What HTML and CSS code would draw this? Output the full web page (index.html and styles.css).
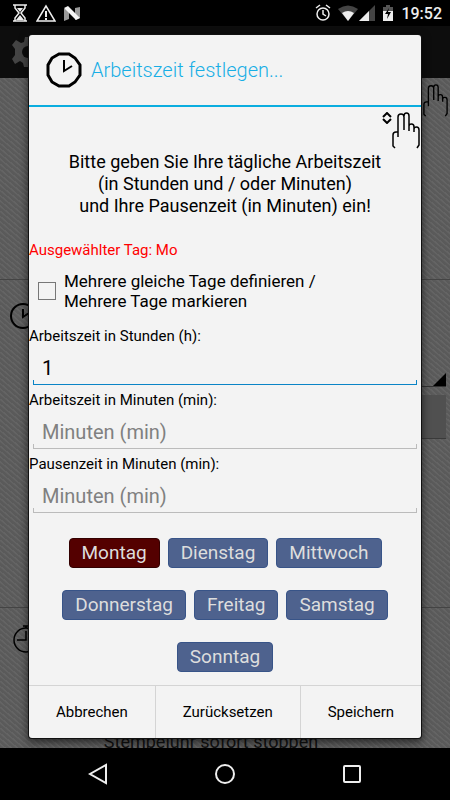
FILE: index.html
```html
<!DOCTYPE html>
<html lang="de">
<head>
<meta charset="utf-8">
<meta name="viewport" content="width=device-width, initial-scale=1">
<title>Arbeitszeit festlegen</title>
<link rel="stylesheet" href="styles.css">
</head>
<body>
<svg class="defs" aria-hidden="true">
  <symbol id="hand" viewBox="0 0 28 37">
    <path d="M3 36L1 34V23Q1 20 4 20H6M6 25V5Q6 2 9 2Q12 2 12 5V18M12 4Q12 1 14.500 1Q17 1 17 4V19M17 14Q17 12 19.500 12Q22 12 22 15V20M22 17Q22 15 24.500 15Q27 15 27 18V33L25 36" fill="none" stroke="currentColor" stroke-width="1.5"/>
  </symbol>
</svg>
<header class="status">
  <div class="status-group">
    <svg width="16" height="20" viewBox="0 0 16 20" fill="none" stroke="#eee" stroke-width="1.5"><path d="M1 2h14M1 18h14M3 2v3l4 5-4 5v3M13 2v3l-4 5 4 5v3"/><path d="M5 5h6l-3 4zM4 17l4-5 4 5z" fill="#eee" stroke="none"/></svg>
    <svg width="20" height="20" viewBox="0 0 20 20" fill="none" stroke="#eee" stroke-width="1.5"><path d="M10 3L1 18h18z"/><path d="M10 8v6M10 15v2" stroke-width="2"/></svg>
    <svg width="16" height="20" viewBox="0 0 16 20"><path d="M0 6l5-2v12l-5 2zM11 5l5-1v11l-5 2z" fill="#999"/><path d="M0 5l4-2 12 12-4 2z" fill="#f4f4f4"/></svg>
  </div>
  <div class="status-group status-right">
    <svg width="16" height="18" viewBox="0 0 16 18" fill="none" stroke="#eee" stroke-width="1.5"><circle cx="8" cy="10" r="6"/><path d="M8 6v4l3 2M1 4l4-3M15 4l-4-3"/></svg>
    <svg class="wifi" width="20" height="18" viewBox="0 0 20 18"><path d="M0 5Q10-2 20 5L10 17z" fill="#444"/><path d="M4 9q6-4 12 0l-6 8z" fill="#eee"/></svg>
    <svg class="signal" width="16" height="18" viewBox="0 0 16 18"><path d="M0 17L16 1v16z" fill="#444"/><path d="M0 17L10 7v10z" fill="#eee"/></svg>
    <svg class="battery" width="10" height="18" viewBox="0 0 10 18"><path d="M3 1h4v2h3v5H0V3h3z" fill="#555"/><path d="M0 7h10v10H0z" fill="#eee"/><path d="M6 4L2 10h3l-1 5 4-7H5z" fill="#000"/></svg>
    <time>19:52</time>
  </div>
</header>
<main class="screen">
  <div class="app" aria-hidden="true">
    <div class="app-bar">
      <svg width="32" height="32" viewBox="0 0 32 32"><path d="M13 1h6l1 5 3 1 4-3 4 5-3 4v6l3 4-4 5-5-3-3 2-1 4h-6l-1-4-3-2-5 3-3-5 3-4v-6L0 9l4-5 5 3 3-1z" fill="#444"/><circle cx="16" cy="16" r="6" fill="#0c0c0c"/></svg>
    </div>
    <div class="pane pane-top"><svg class="app-hand" width="27" height="33"><use href="#hand"/></svg></div>
    <div class="pane pane-mid">
      <svg width="26" height="26" viewBox="0 0 26 26" fill="none" stroke="#000" stroke-width="2"><circle cx="13" cy="13" r="12"/><path d="M13 6v8l6-4"/></svg>
      <div class="spinner"><i class="corner"></i></div>
      <div class="app-button"></div>
    </div>
    <div class="pane pane-low">
      <svg width="26" height="28" viewBox="0 0 26 28" fill="none" stroke="#000" stroke-width="1.5"><circle cx="13" cy="15" r="12"/><path d="M13 3V1M10 1h6M13 6v9H4"/></svg>
      <p class="app-text">Stempeluhr sofort stoppen</p>
    </div>
  </div>
  <form class="dialog" role="dialog" aria-labelledby="title">
    <div class="dialog-head">
      <svg width="36" height="36" viewBox="0 0 36 36" fill="none" stroke="#000" stroke-width="3"><path d="M13 2h10l6 4 5 7v10l-5 7-6 4H13l-7-4-4-7V13l4-7z"/><path d="M18 8v11l8-5" stroke-width="2"/></svg>
      <h1 id="title">Arbeitszeit festlegen...</h1>
    </div>
    <div class="dialog-body">
      <div class="gesture">
        <svg width="10" height="12" viewBox="0 0 10 12" fill="none" stroke="#000" stroke-width="2"><path d="M1 5l4-4 4 4M1 7l4 4 4-4"/></svg>
        <svg width="28" height="37"><use href="#hand"/></svg>
      </div>
      <p class="intro">Bitte geben Sie Ihre tägliche Arbeitszeit<br>(in Stunden und / oder Minuten)<br>und Ihre Pausenzeit (in Minuten) ein!</p>
      <p class="selected">Ausgewählter Tag: Mo</p>
      <div class="check">
        <input type="checkbox" id="multi">
        <label for="multi">Mehrere gleiche Tage definieren /<br>Mehrere Tage markieren</label>
      </div>
      <div class="field">
        <label for="hours">Arbeitszeit in Stunden (h):</label>
        <div class="entry active"><input id="hours" type="text" value="1"></div>
      </div>
      <div class="field">
        <label for="minutes">Arbeitszeit in Minuten (min):</label>
        <div class="entry"><input id="minutes" type="text" placeholder="Minuten (min)"></div>
      </div>
      <div class="field">
        <label for="pause">Pausenzeit in Minuten (min):</label>
        <div class="entry"><input id="pause" type="text" placeholder="Minuten (min)"></div>
      </div>
      <div class="days">
        <button type="button" class="on">Montag</button>
        <button type="button">Dienstag</button>
        <button type="button">Mittwoch</button>
        <button type="button">Donnerstag</button>
        <button type="button">Freitag</button>
        <button type="button">Samstag</button>
        <button type="button">Sonntag</button>
      </div>
    </div>
    <div class="actions">
      <button type="button">Abbrechen</button>
      <button type="button">Zurücksetzen</button>
      <button type="button">Speichern</button>
    </div>
  </form>
</main>
<nav class="navbar">
  <button type="button" aria-label="Zurück"><svg width="20" height="22" viewBox="0 0 20 22"><path d="M18 2v18L2 11z"/></svg></button>
  <button type="button" aria-label="Startseite"><svg width="22" height="22" viewBox="0 0 22 22"><circle cx="11" cy="11" r="9"/></svg></button>
  <button type="button" aria-label="Übersicht"><svg width="20" height="20" viewBox="0 0 20 20"><rect x="2" y="2" width="16" height="16" rx="1"/></svg></button>
</nav>
</body>
</html>
```
FILE: styles.css
```css
* { box-sizing: border-box; }
body {
  margin: 0;
  min-height: 100vh;
  display: flex;
  flex-direction: column;
  background: #000;
  color: #000;
  font-family: Roboto, "Liberation Sans", sans-serif;
}
h1, p { margin: 0; font-weight: 400; }
button, input { font: inherit; color: inherit; }
svg { display: block; flex: none; }
.defs { position: absolute; width: 0; height: 0; }

.status {
  height: 26px;
  padding: 0 8px 0 12px;
  display: flex;
  align-items: center;
  justify-content: space-between;
  color: #eee;
  font-size: 16px;
  font-weight: 500;
}
.status-group { display: flex; align-items: center; gap: 8px; }
.status-right { gap: 0; }
.wifi { margin-left: 7px; }
.signal { margin-left: 1px; }
.battery { margin: 0 8px; }

.screen {
  position: relative;
  flex: 1;
  padding: 9px 29px 10px;
  display: flex;
  flex-direction: column;
}
.app {
  position: absolute;
  inset: 0;
  overflow: hidden;
  background: repeating-linear-gradient(40deg, #5a5a5a 0 2px, #646464 3px 4px);
}
.app-bar { height: 52px; padding: 10px 12px; background: #0d0d0d; }
.pane { border-bottom: 1px solid #444; }
.pane-top { height: 202px; padding: 6px 1px; }
.app-hand { margin-left: auto; }
.pane-mid { height: 328px; padding: 23px 4px 0 10px; }
.spinner, .app-button { width: 60%; margin-left: auto; }
.spinner { height: 58px; display: flex; align-items: flex-end; justify-content: flex-end; border-bottom: 1px solid #333; }
.corner { border-left: 13px solid transparent; border-bottom: 13px solid #000; }
.app-button { height: 44px; margin-top: 8px; background: #505050; border-bottom: 1px solid #3a3a3a; }
.pane-low { height: 200px; padding: 17px 13px; }
.app-text { margin-top: 78px; padding-right: 28px; font-size: 18px; line-height: 22px; text-align: center; color: #111; }

.dialog {
  position: relative;
  flex: 1;
  display: flex;
  flex-direction: column;
  background: #f3f3f3;
  border-radius: 3px;
  box-shadow: 0 0 0 1px #111, 0 3px 8px 1px rgba(0, 0, 0, .6);
}
.dialog-head {
  height: 72px;
  padding: 0 17px;
  display: flex;
  align-items: center;
  gap: 9px;
  border-bottom: 2px solid #0aaddf;
  color: #18aee5;
}
.dialog-head h1 { font-size: 20px; font-weight: 300; }
.dialog-body { flex: 1; }
.gesture { height: 44px; padding: 5px 1px 0; display: flex; justify-content: flex-end; }
.intro { font-size: 18px; line-height: 22px; text-align: center; }
.selected { margin-top: 23px; font-size: 15px; line-height: 20px; color: #f00; }
.check { margin-top: 11px; padding-left: 9px; display: flex; align-items: center; gap: 8px; font-size: 17px; line-height: 20px; }
.check input { appearance: none; width: 18px; height: 18px; margin: 0; border: 1px solid #777; background: #f3f3f3; }
.check + .field { margin-top: 15px; }
.field { height: 64px; font-size: 15px; line-height: 20px; }
.field label { display: block; }
.entry {
  height: 39px;
  margin: 0 4px;
  display: flex;
  background:
    linear-gradient(#bbb, #bbb) left bottom / 1px 4px no-repeat,
    linear-gradient(#bbb, #bbb) right bottom / 1px 4px no-repeat;
  border-bottom: 1px solid #bbb;
}
.entry.active {
  background:
    linear-gradient(#0a84c6, #0a84c6) left bottom / 1px 4px no-repeat,
    linear-gradient(#0a84c6, #0a84c6) right bottom / 1px 4px no-repeat;
  border-bottom: 1px solid #0a84c6;
}
.entry input { flex: 1; min-width: 0; padding: 6px 9px 0; border: 0; outline: 0; background: none; font-size: 20px; }
.entry input::placeholder { color: #808080; opacity: 1; }
.days { padding: 20px 24px 0; display: flex; flex-wrap: wrap; justify-content: center; gap: 22px 8px; }
.days button {
  height: 30px;
  padding: 0 12px;
  border: 1px solid #385488;
  border-radius: 4px;
  background: #4e628e;
  color: #ddd;
  font-size: 19px;
  line-height: 28px;
}
.days .on { background: #540000; border-color: #300; }
.actions { height: 53px; display: flex; border-top: 1px solid #d4d4d4; }
.actions button { flex: 1 1 auto; padding: 0; border: 0; background: none; font-size: 15px; }
.actions button + button { border-left: 1px solid #d4d4d4; }

.navbar { height: 52px; display: flex; justify-content: center; gap: 63px; }
.navbar button { width: 64px; padding: 0; border: 0; background: none; display: flex; align-items: center; justify-content: center; }
.navbar svg { fill: none; stroke: #eee; stroke-width: 2; }
```
